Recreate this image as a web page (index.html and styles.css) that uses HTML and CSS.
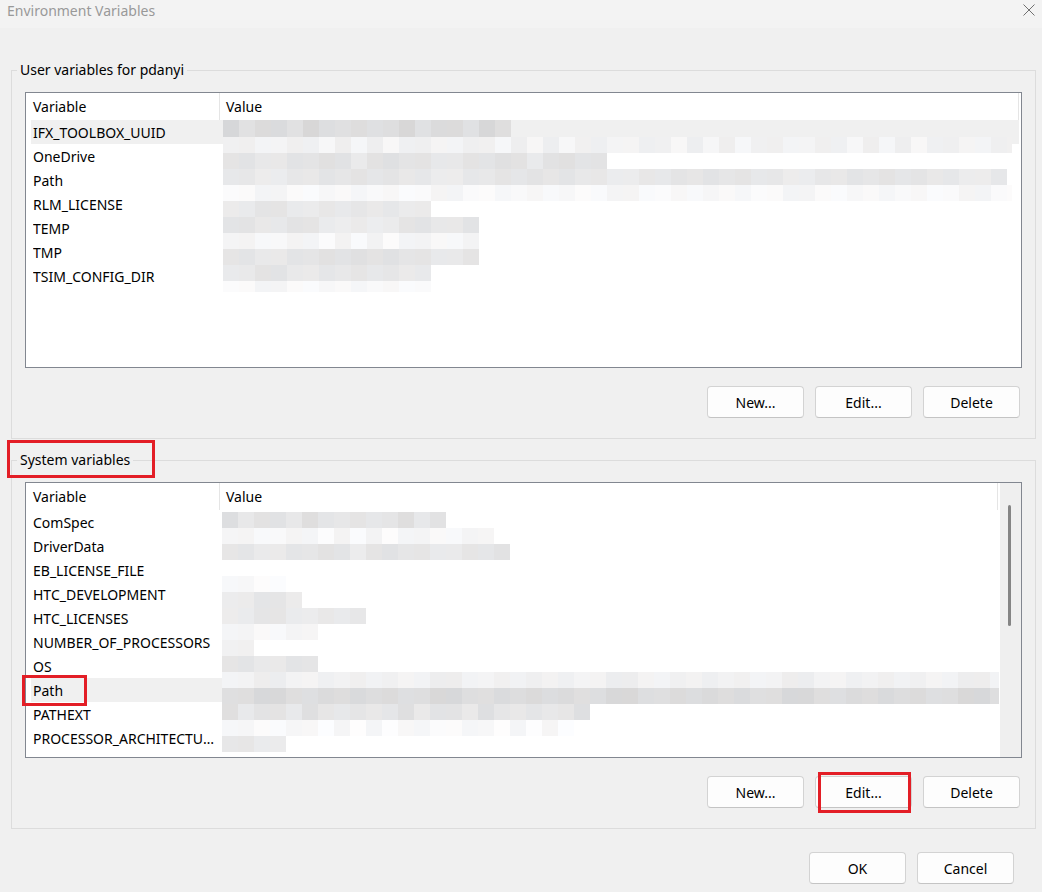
FILE: index.html
```html
<!DOCTYPE html>
<html>
<head>
	<title>Environment Variables</title>
	<meta charset="utf-8">
	<link rel="stylesheet" href="styles.css">
</head>
<body>
	<div class="titlebar">
		<span class="title">Environment Variables</span>
		<svg class="close" viewBox="0 0 12 12"><path d="M0.5 0.5L11.5 11.5M11.5 0.5L0.5 11.5" stroke="#707070" stroke-width="1" fill="none"/></svg>
	</div>
	<div class="dialog">
		<fieldset class="group">
			<legend>User variables for pdanyi</legend>
			<div class="list">
				<div class="list-view">
					<div class="list-head">
						<div class="col-name">Variable</div>
						<div class="col-value">Value</div>
					</div>
					<div class="row selected"><span>IFX_TOOLBOX_UUID</span></div>
					<div class="row"><span>OneDrive</span></div>
					<div class="row"><span>Path</span></div>
					<div class="row"><span>RLM_LICENSE</span></div>
					<div class="row"><span>TEMP</span></div>
					<div class="row"><span>TMP</span></div>
					<div class="row"><span>TSIM_CONFIG_DIR</span></div>
				</div>
				<canvas id="user-mosaic" class="mosaic" width="800" height="175"></canvas>
			</div>
			<div class="buttons">
				<button class="btn">New...</button>
				<button class="btn">Edit...</button>
				<button class="btn">Delete</button>
			</div>
		</fieldset>
		<fieldset class="group">
			<legend>System variables</legend>
			<div class="list">
				<div class="list-view">
					<div class="list-head">
						<div class="col-name">Variable</div>
						<div class="col-value">Value</div>
					</div>
					<div class="row"><span>ComSpec</span></div>
					<div class="row"><span>DriverData</span></div>
					<div class="row"><span>EB_LICENSE_FILE</span></div>
					<div class="row"><span>HTC_DEVELOPMENT</span></div>
					<div class="row"><span>HTC_LICENSES</span></div>
					<div class="row"><span>NUMBER_OF_PROCESSORS</span></div>
					<div class="row"><span>OS</span></div>
					<div class="row selected"><span>Path</span></div>
					<div class="row"><span>PATHEXT</span></div>
					<div class="row"><span>PROCESSOR_ARCHITECTURE</span></div>
				</div>
				<div class="scrollbar"><div class="thumb"></div></div>
				<canvas id="system-mosaic" class="mosaic" width="780" height="245"></canvas>
			</div>
			<div class="buttons">
				<button class="btn">New...</button>
				<button class="btn">Edit...</button>
				<button class="btn">Delete</button>
			</div>
		</fieldset>
		<div class="footer">
			<button class="btn">OK</button>
			<button class="btn">Cancel</button>
		</div>
	</div>

	<div class="mark mark-legend"></div>
	<div class="mark mark-path"></div>
	<div class="mark mark-edit"></div>

<script type="text/javascript">
	// pixelated (redacted) values: [top, height, blocks, grey]
	var userRows = [
		[120, 17, 18, 220], [137, 16, 50, 243], [153, 16, 24, 229], [169, 16, 49, 231],
		[185, 16, 50, 248], [201, 16, 13, 230], [217, 16, 16, 232], [233, 16, 16, 246],
		[249, 16, 16, 229], [265, 16, 13, 232], [281, 11, 13, 247]
	];
	var systemRows = [
		[512, 16, 14, 227], [528, 16, 17, 248], [544, 16, 18, 231], [576, 16, 4, 247],
		[592, 16, 5, 233], [608, 16, 9, 231], [624, 16, 6, 249], [640, 16, 2, 243],
		[656, 16, 6, 229], [672, 16, 49, 242], [688, 16, 49, 219], [704, 16, 23, 228],
		[720, 16, 22, 250], [736, 16, 4, 232]
	];

	function drawMosaic(id, originY, startX, maxX, rows){
		var ctx = document.getElementById(id).getContext('2d');
		for (var r = 0; r < rows.length; r++){
			var row = rows[r];
			for (var i = 0; i < row[2]; i++){
				var x = startX + i * 16;
				var w = Math.min(16, maxX - x);
				if (w <= 0) break;
				var g = Math.min(253, row[3] + (i * 7 + r * 13 + i * i * 3) % 11 - 5);
				var t = (i + r) % 3 - 1;
				ctx.fillStyle = 'rgb(' + (g + t) + ',' + g + ',' + (g - t + 1) + ')';
				ctx.fillRect(x - 222, row[0] - originY, w, row[1]);
			}
		}
	}

	drawMosaic('user-mosaic', 120, 223, 1012, userRows);
	drawMosaic('system-mosaic', 510, 222, 999, systemRows);
</script>
</body>
</html>
```

FILE: styles.css
```css
body{
	position: relative;
	margin: 0;
	width: 1042px;
	height: 892px;
	overflow: hidden;
	background: #f0f0f0;
	font-family: "Noto Sans", "Segoe UI", sans-serif;
	font-size: 14px;
	color: #000;
}
.titlebar{
	display: flex;
	justify-content: space-between;
	height: 28px;
	background: #f3f3f3;
}
.titlebar .title{
	padding-left: 7px;
	line-height: 22px;
	color: #999;
}
.titlebar .close{
	width: 12px;
	height: 12px;
	margin: 4px 7px 0 0;
}
.dialog{
	padding: 32px 6px 0 11px;
}
.group{
	margin: 0;
	padding: 12px 13px 20px 13px;
	border: 1px solid #dcdcdc;
}
.group + .group{
	margin-top: 11px;
}
.group legend{
	margin-left: -8px;
	padding: 0 3px;
	line-height: 20px;
}
.list{
	position: relative;
	display: flex;
	height: 274px;
	border: 1px solid #828790;
	background: #fff;
	overflow: hidden;
}
.list-view{
	flex: 1;
}
.list-head{
	display: flex;
	height: 27px;
	line-height: 28px;
	margin-right: 2px;
}
.list-head .col-name{
	width: 186px;
	padding-left: 7px;
	border-right: 1px solid #e5e5e5;
}
.list-head .col-value{
	flex: 1;
	padding-left: 6px;
	border-right: 1px solid #e5e5e5;
}
.row{
	height: 24px;
	line-height: 25px;
	margin: 0 2px 0 5px;
	padding-left: 2px;
}
.row span{
	display: block;
	width: 184px;
	height: 24px;
	overflow: hidden;
	white-space: nowrap;
	text-overflow: ellipsis;
}
.row.selected{
	background: #f0f0f0;
}
.mosaic{
	position: absolute;
	left: 196px;
	top: 27px;
}
.scrollbar{
	width: 21px;
	background: #efefef;
}
.scrollbar .thumb{
	width: 3px;
	height: 121px;
	margin: 22px 0 0 8px;
	border-radius: 2px;
	background: #858585;
}
.buttons{
	display: flex;
	justify-content: flex-end;
	gap: 11px;
	margin-top: 18px;
	padding-right: 2px;
}
.footer{
	display: flex;
	justify-content: flex-end;
	gap: 11px;
	margin-top: 23px;
	padding-right: 22px;
}
.btn{
	box-sizing: border-box;
	width: 97px;
	height: 32px;
	padding: 0;
	border: 1px solid #d3d3d3;
	border-bottom-color: #c4c4c4;
	border-radius: 4px;
	background: #fdfdfd;
	font: inherit;
	color: #000;
}
.mark{
	position: absolute;
	box-sizing: border-box;
	border: 3px solid #e31e26;
}
.mark-legend{
	left: 7px;
	top: 440px;
	width: 148px;
	height: 38px;
}
.mark-path{
	left: 22px;
	top: 675px;
	width: 65px;
	height: 31px;
}
.mark-edit{
	left: 818px;
	top: 772px;
	width: 93px;
	height: 41px;
}
```
